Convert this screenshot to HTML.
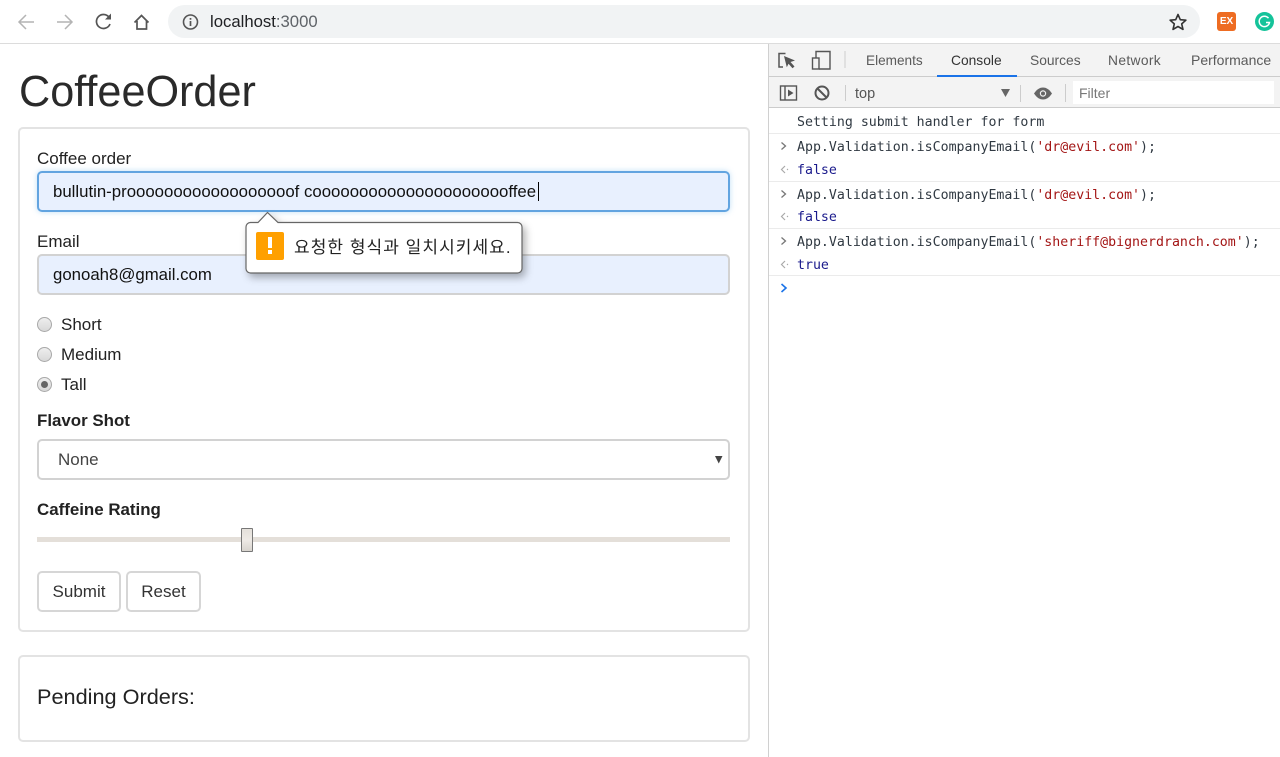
<!DOCTYPE html>
<html><head><meta charset="utf-8"><title>CoffeeOrder</title>
<style>
html,body{margin:0;padding:0;background:#fff}
body{width:1280px;height:757px;position:relative;overflow:hidden;font-family:"Liberation Sans","Noto Sans CJK KR",sans-serif;color:#222}
.a{position:absolute;white-space:nowrap}
.box{position:absolute;box-sizing:border-box;border:2px solid #e3e3e3;border-radius:5px;background:#fff}
.inp{position:absolute;box-sizing:border-box;left:37px;width:693px;background:#e8f0fe;border-radius:5px;border:2px solid #d2d2d2}
.t{font-size:17px;line-height:20px;color:#222}
.b{font-weight:bold}
.btn{position:absolute;box-sizing:border-box;top:571px;height:41px;border:2px solid #d6d6d6;border-radius:5px;background:#fff;text-align:center;font-size:17px;line-height:38px;color:#333}
.radio{position:absolute;left:37px;width:15px;height:15px;box-sizing:border-box;border-radius:50%;border:1px solid #a8a8a8;background:linear-gradient(#eee,#d8d8d8)}
.tab{position:absolute;top:51px;font-size:14px;line-height:20px;color:#5a5a5a;white-space:nowrap}
.m{position:absolute;left:797px;font-family:"DejaVu Sans Mono",monospace;font-size:13.250px;line-height:18px;color:#303942;white-space:pre}
.kw{color:#1a1a8c}.s{color:#a31515}
.line{position:absolute;left:769px;right:0;height:1px;background:#ebebeb}
svg{position:absolute;overflow:visible}
</style></head><body>

<!-- Browser toolbar -->
<div class="a" style="left:0;top:0;width:1280px;height:43px;background:#fff"></div>
<div class="a" style="left:0;top:43px;width:1280px;height:1px;background:#dcdcdc"></div>
<svg style="left:0;top:0" width="160" height="44" fill="none">
<path d="M34 22H19M26 15l-7 7 7 7" stroke="#b4b4b4" stroke-width="1.500"/>
<path d="M57 22h15M65 15l7 7-7 7" stroke="#b4b4b4" stroke-width="1.500"/>
<path d="M109 17.200A7 7 0 1 0 110 24" stroke="#555" stroke-width="1.700"/>
<path d="M111 13.500v6h-6z" fill="#555"/>
<path d="M134.500 22.500l7-7 7 7M137 21v8h9.500v-8" stroke="#555" stroke-width="1.700"/>
</svg>
<div class="a" style="left:168px;top:5px;width:1032px;height:33px;border-radius:17px;background:#f1f3f4"></div>
<svg style="left:182px;top:14px" width="18" height="18" fill="none">
<circle cx="8.500" cy="8" r="7" stroke="#555" stroke-width="1.600"/>
<path d="M8.500 7v5M8.500 4v1.800" stroke="#555" stroke-width="1.700"/>
</svg>
<div class="a" style="left:210px;top:12px;font-size:16.700px;line-height:20px;color:#202124">localhost<span style="color:#5f6368">:3000</span></div>
<svg style="left:1168px;top:12px" width="20" height="20" fill="none">
<path d="M10 2.500l2.300 5.200 5.600.5-4.200 3.700 1.300 5.500L10 14.500l-5 2.900 1.300-5.500L2.100 8.200l5.600-.5z" stroke="#333" stroke-width="1.600" stroke-linejoin="round"/>
</svg>
<div class="a" style="left:1217px;top:12px;width:19px;height:19px;border-radius:3px;background:#ee6c22;color:#fff;font-size:10px;font-weight:bold;line-height:20px;text-align:center">EX</div>
<svg style="left:1255px;top:12px" width="20" height="20" fill="none">
<circle cx="9.500" cy="9.500" r="9.500" fill="#15c39a"/>
<path d="M13.500 6.200a5.200 5.200 0 1 0 1 4.300h-3.500" stroke="#fff" stroke-width="1.500"/>
</svg>

<!-- Page -->
<div class="a" style="left:19px;top:66px;font-size:43.200px;line-height:52px;color:#2a2a2a">CoffeeOrder</div>

<div class="box" style="left:18px;top:127px;width:732px;height:505px"></div>
<div class="a t" style="left:37px;top:149px">Coffee order</div>
<div class="inp" style="top:171px;height:41px;border-color:#62a4e0;box-shadow:0 0 6px rgba(102,175,233,.4)"></div>
<div class="a" style="left:53px;top:181px;font-size:16.800px;line-height:21px;color:#111">bullutin-proooooooooooooooooof coooooooooooooooooooooffee</div>
<div class="a" style="left:538px;top:182px;width:1px;height:19px;background:#000"></div>

<div class="a t" style="left:37px;top:232px">Email</div>
<div class="inp" style="top:254px;height:41px"></div>
<div class="a" style="left:53px;top:264px;font-size:16.800px;line-height:21px;color:#111">gonoah8@gmail.com</div>

<div class="radio" style="top:317px"></div>
<div class="a t" style="left:61px;top:315px">Short</div>
<div class="radio" style="top:347px"></div>
<div class="a t" style="left:61px;top:345px">Medium</div>
<div class="radio" style="top:377px"></div>
<div class="a" style="left:41px;top:381px;width:7px;height:7px;border-radius:50%;background:#666"></div>
<div class="a t" style="left:61px;top:375px">Tall</div>

<div class="a t b" style="left:37px;top:411px;font-size:16.900px">Flavor Shot</div>
<div class="inp" style="top:439px;height:41px;background:#fff"></div>
<div class="a" style="left:58px;top:450px;font-size:17px;line-height:20px;color:#444">None</div>
<svg style="left:715px;top:456px" width="8" height="9"><path d="M0 0h7.500L3.750 7.500z" fill="#444"/></svg>

<div class="a t b" style="left:37px;top:500px;font-size:16.900px">Caffeine Rating</div>
<div class="a" style="left:37px;top:537px;width:693px;height:5px;background:#e4dfd9"></div>
<div class="a" style="left:241px;top:528px;width:12px;height:24px;box-sizing:border-box;border:1px solid #777;border-radius:1px;background:linear-gradient(#e4e0da,#eeeae6 50%,#d8d4ce)"></div>

<div class="btn" style="left:37px;width:84px">Submit</div>
<div class="btn" style="left:126px;width:75px">Reset</div>

<div class="box" style="left:18px;top:655px;width:732px;height:87px"></div>
<div class="a" style="left:37px;top:684px;font-size:21.700px;line-height:26px;color:#222">Pending Orders:</div>

<!-- Validation bubble -->
<svg style="left:245px;top:211px;filter:drop-shadow(3px 4px 4px rgba(0,0,0,.3))" width="278" height="63">
<path d="M5 11.500H13L22.500 1.500 33 11.500H272.500a4.500 4.500 0 0 1 4.500 4.500V57.500a4.500 4.500 0 0 1-4.500 4.500H5.500a4.500 4.500 0 0 1-4.500-4.500V16a4.500 4.500 0 0 1 4.500-4.500z" fill="#fff" stroke="#666" stroke-width="1.200"/>
</svg>
<div class="a" style="left:256px;top:232px;width:28px;height:28px;border-radius:2px;background:#ffa000"></div>
<div class="a" style="left:268px;top:237px;width:4px;height:11px;background:#fff"></div>
<div class="a" style="left:268px;top:250px;width:4px;height:4px;background:#fff"></div>
<div class="a" style="left:294px;top:237px;font-size:17px;line-height:22px;letter-spacing:1.050px;color:#222">요청한 형식과 일치시키세요.</div>

<!-- DevTools -->
<div class="a" style="left:768px;top:44px;width:1px;height:713px;background:#d0d0d0"></div>
<div class="a" style="left:769px;top:44px;width:511px;height:32px;background:#f3f3f3"></div>
<div class="a" style="left:769px;top:76px;width:511px;height:1px;background:#ccc"></div>
<div class="a" style="left:769px;top:77px;width:511px;height:30px;background:#f3f3f3"></div>
<div class="a" style="left:769px;top:107px;width:511px;height:1px;background:#ccc"></div>

<svg style="left:770px;top:44px" width="90" height="64" fill="none">
<path d="M15.500 9.500h-6.500v13.500h4" stroke="#555" stroke-width="1.500"/>
<path d="M14 12l11 4.500-4.500 1.500 4 4.500-2 1.800-4-4.500-1.700 3.500z" fill="#555"/>
<rect x="42.500" y="14" width="6.500" height="11" stroke="#555" stroke-width="1.400"/>
<path d="M46 14V7.500h14v17.500H49" stroke="#555" stroke-width="1.400"/>
<path d="M75 7v17" stroke="#ccc"/>
<rect x="10.500" y="42" width="16" height="14" stroke="#555" stroke-width="1.400"/>
<path d="M15 42v14" stroke="#555" stroke-width="1.400"/>
<path d="M18 45.500l5.500 3.500-5.500 3.500z" fill="#555"/>
<circle cx="52" cy="49" r="6.500" stroke="#555" stroke-width="2"/>
<path d="M47.500 44.500l9 9" stroke="#555" stroke-width="2"/>
<path d="M75.500 41v16" stroke="#ccc"/>
</svg>
<div class="tab" style="left:866px;font-size:13.600px;top:51px">Elements</div>
<div class="tab" style="left:951px;color:#333;font-size:13.800px">Console</div>
<div class="a" style="left:937px;top:75px;width:80px;height:2px;background:#1a73e8"></div>
<div class="tab" style="left:1030px;font-size:13.800px">Sources</div>
<div class="tab" style="left:1108px;font-size:13.800px;letter-spacing:.35px">Network</div>
<div class="tab" style="left:1191px;font-size:14px;top:50px">Performance</div>

<div class="a" style="left:855px;top:85px;font-size:14.500px;line-height:18px;color:#555">top</div>
<svg style="left:1000px;top:88px" width="60" height="14" fill="none">
<path d="M1 1h9L5.500 9z" fill="#666"/>
<path d="M20.500 -3v17" stroke="#ccc"/>
<path d="M34 5.500c3-4.500 6-6 9-6s6 1.500 9 6c-3 4.500-6 6-9 6s-6-1.500-9-6z" fill="#666"/>
<circle cx="43" cy="5.500" r="3.200" fill="#f3f3f3"/><circle cx="43" cy="5.500" r="2" fill="#666"/>
</svg>
<div class="a" style="left:1065px;top:84px;width:1px;height:18px;background:#ccc"></div>
<div class="a" style="left:1073px;top:81px;width:201px;height:23px;background:#fff"></div>
<div class="a" style="left:1079px;top:84px;font-size:14px;line-height:18px;color:#777">Filter</div>

<div class="m" style="top:114px">Setting submit handler for form</div>
<div class="line" style="top:133px"></div>
<div class="m" style="top:139px">App.Validation.isCompanyEmail(<span class="s">'dr@evil.com'</span>);</div>
<div class="m kw" style="top:162px">false</div>
<div class="line" style="top:181px"></div>
<div class="m" style="top:187px">App.Validation.isCompanyEmail(<span class="s">'dr@evil.com'</span>);</div>
<div class="m kw" style="top:209px">false</div>
<div class="line" style="top:228px"></div>
<div class="m" style="top:234px">App.Validation.isCompanyEmail(<span class="s">'sheriff@bignerdranch.com'</span>);</div>
<div class="m kw" style="top:257px">true</div>
<div class="line" style="top:275px"></div>
<svg style="left:779px;top:140px" width="12" height="155" fill="none">
<path d="M2.500 2.500l4 3.500-4 3.500M2.500 50.500l4 3.500-4 3.500M2.500 97.500l4 3.500-4 3.500" stroke="#777" stroke-width="1.300"/>
<path d="M6 26l-3.500 3.500 3.500 3.500M6 73l-3.500 3.500 3.500 3.500M6 121l-3.500 3.500 3.500 3.500" stroke="#aaa" stroke-width="1.200"/>
<circle cx="8.500" cy="29.500" r=".7" fill="#aaa"/><circle cx="8.500" cy="76.500" r=".7" fill="#aaa"/><circle cx="8.500" cy="124.500" r=".7" fill="#aaa"/>
<path d="M2.500 144l4.500 4-4.500 4" stroke="#1a73e8" stroke-width="1.600"/>
</svg>
</body></html>
